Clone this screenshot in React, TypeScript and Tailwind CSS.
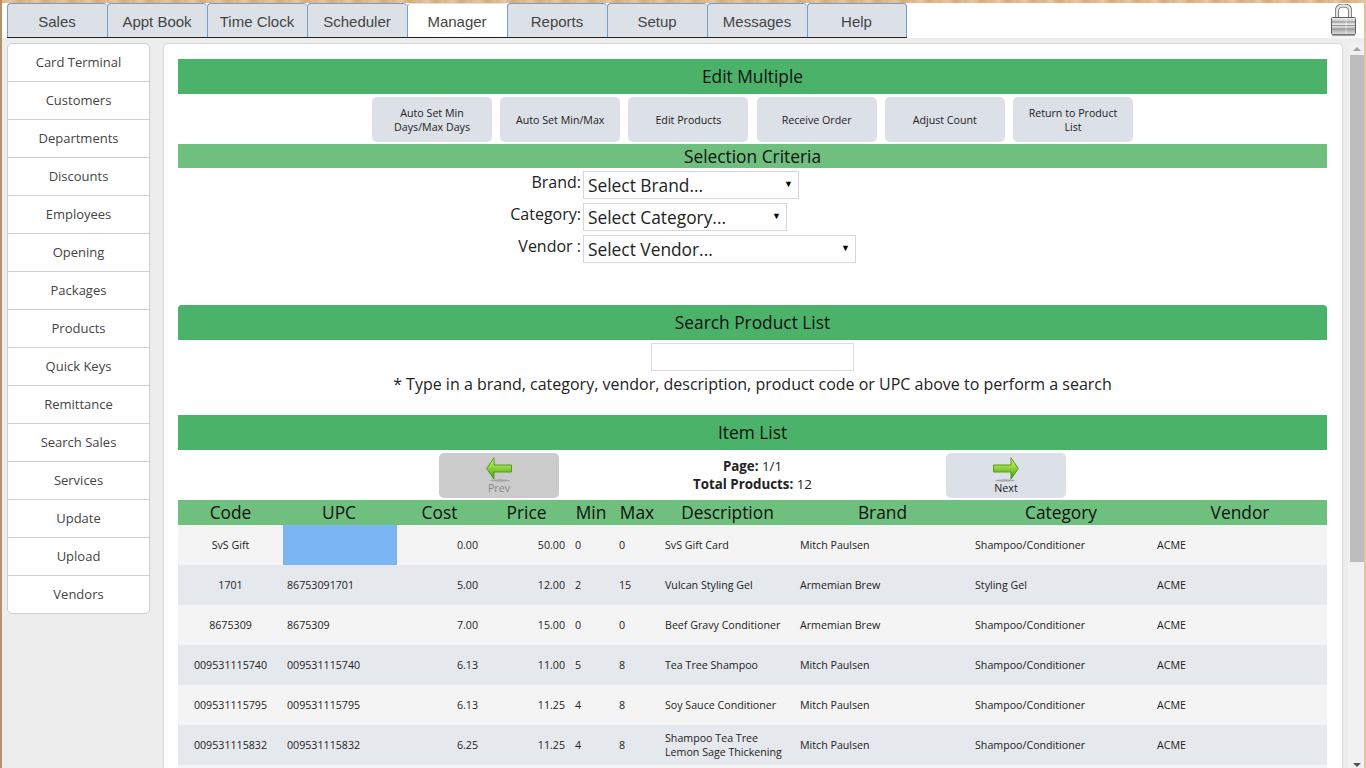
import React from "react";

const tabs = ["Sales", "Appt Book", "Time Clock", "Scheduler", "Manager", "Reports", "Setup", "Messages", "Help"];
const menu = ["Card Terminal", "Customers", "Departments", "Discounts", "Employees", "Opening", "Packages", "Products", "Quick Keys", "Remittance", "Search Sales", "Services", "Update", "Upload", "Vendors"];
const actions = [["Auto Set Min", "Days/Max Days"], ["Auto Set Min/Max"], ["Edit Products"], ["Receive Order"], ["Adjust Count"], ["Return to Product", "List"]];

const rows = [
  ["SvS Gift", "", "0.00", "50.00", "0", "0", ["SvS Gift Card"], "Mitch Paulsen", "Shampoo/Conditioner", "ACME"],
  ["1701", "86753091701", "5.00", "12.00", "2", "15", ["Vulcan Styling Gel"], "Armemian Brew", "Styling Gel", "ACME"],
  ["8675309", "8675309", "7.00", "15.00", "0", "0", ["Beef Gravy Conditioner"], "Armemian Brew", "Shampoo/Conditioner", "ACME"],
  ["009531115740", "009531115740", "6.13", "11.00", "5", "8", ["Tea Tree Shampoo"], "Mitch Paulsen", "Shampoo/Conditioner", "ACME"],
  ["009531115795", "009531115795", "6.13", "11.25", "4", "8", ["Soy Sauce Conditioner"], "Mitch Paulsen", "Shampoo/Conditioner", "ACME"],
  ["009531115832", "009531115832", "6.25", "11.25", "4", "8", ["Shampoo Tea Tree", "Lemon Sage Thickening"], "Mitch Paulsen", "Shampoo/Conditioner", "ACME"],
] as const;

const columns = [
  ["Code", "w-[105px]"],
  ["UPC", "w-[114px] pr-[2px]"],
  ["Cost", "w-[85px]"],
  ["Price", "w-[87px] pl-[2px]"],
  ["Min", "w-[44px]"],
  ["Max", "w-[48px]"],
  ["Description", "w-[135px] pr-[2px]"],
  ["Brand", "w-[175px] pr-[2px]"],
  ["Category", "w-[182px] pr-[2px]"],
  ["Vendor", "w-[174px]"],
];

function Lock() {
  return (
    <svg width="26" height="33" viewBox="0 0 26 33" className="mt-[1px]">
      <defs>
        <linearGradient id="lockbody" x1="0" y1="0" x2="0" y2="1">
          <stop offset="0" stopColor="#f4f4f4" />
          <stop offset="0.25" stopColor="#c4c4c4" />
          <stop offset="0.45" stopColor="#ededed" />
          <stop offset="0.7" stopColor="#adadad" />
          <stop offset="1" stopColor="#dedede" />
        </linearGradient>
      </defs>
      <path d="M6 15V6.500C6 3 8.500 1.500 12.500 1.500S19 3 19 6.500V15" fill="none" stroke="#6f6f6f" strokeWidth="4" />
      <path d="M6 15V6.500C6 3 8.500 1.500 12.500 1.500S19 3 19 6.500V15" fill="none" stroke="#e4e4e4" strokeWidth="2.400" />
      <rect x="0.500" y="13.500" width="24" height="17" rx="1" fill="url(#lockbody)" stroke="#5f5f5f" />
      <path d="M1 18h23M1 21.500h23M1 25h23" stroke="#949494" strokeWidth="1" />
      <path d="M15 14v16" stroke="#ffffff" strokeOpacity="0.45" strokeWidth="1" />
      <path d="M1 31.500h23" stroke="#a5a5a5" strokeWidth="1.500" />
    </svg>
  );
}

function Arrow({ flip }: { flip?: boolean }) {
  const id = flip ? "arrowprev" : "arrownext";
  return (
    <svg width="26" height="25" viewBox="0 0 26 25" className={flip ? "-scale-x-100" : ""}>
      <defs>
        <linearGradient id={id} x1="0" y1="0" x2="0" y2="1">
          <stop offset="0" stopColor="#d6f29a" />
          <stop offset="0.45" stopColor="#93d63a" />
          <stop offset="1" stopColor="#3f9a10" />
        </linearGradient>
      </defs>
      <ellipse cx="12" cy="23.500" rx="10" ry="1.200" fill="#9a9a9a" fillOpacity="0.8" />
      <path d="M0.500 8H18V0.800L25.300 11.500L18 22.200V15H0.500Z" fill={`url(#${id})`} stroke="#559a22" strokeWidth="1" strokeLinejoin="round" />
    </svg>
  );
}

function Dropdown({ label, text, width }: { label: string; text: string; width: string }) {
  return (
    <div className="flex h-[28px] items-start">
      <label className="w-[403px] text-right text-[16px] leading-[22px] text-[#222]">{label}</label>
      <div className={`ml-[2px] flex h-[28px] items-center justify-between border border-[#d5d5dd] bg-white pl-[4px] pr-[5px] text-[17.33px] text-[#222] ${width}`}>
        <span className="mt-[1px]">{text}</span>
        <span className="mb-[2px] text-[9px] text-black">▼</span>
      </div>
    </div>
  );
}

export default function App() {
  return (
    <div className="flex h-screen flex-col overflow-hidden border-x-2 border-l-[#b8916c] border-r-[#e5c49a] bg-[#ededed] font-['Open_Sans',sans-serif]">
      <div className="h-[3px] shrink-0 bg-[repeating-linear-gradient(90deg,#dcb485_0px,#e8c79c_9px,#d6ab78_17px,#e2bd8f_26px)]" />
      <div className="flex h-[35px] shrink-0 items-start justify-between bg-white pl-[5px] pr-[7px]">
        <div className="flex border-b border-[#222]">
          {tabs.map((t) => (
            <div
              key={t}
              className={`flex h-[34px] w-[100px] items-center justify-center rounded-t-[4px] border-l border-t border-[#6f9fcc] pr-[1px] pt-[3px] font-['Liberation_Sans',sans-serif] text-[15px] text-[#444] ${t === "Manager" ? "border-t-[#d5e3f0] bg-white" : "bg-[#dce1e8]"} ${t === "Help" ? "border-r" : ""}`}
            >
              {t}
            </div>
          ))}
        </div>
        <Lock />
      </div>

      <div className="flex min-h-0 flex-1 pt-[5px]">
        <div className="ml-[5px] w-[143px] shrink-0">
          <div className="overflow-hidden rounded-[5px] border border-[#cfcfcf] bg-white">
            {menu.map((m, i) => (
              <div key={m} className={`flex items-center justify-center text-[13px] text-[#444] ${i > 0 ? "h-[38px] border-t border-[#cfcfcf]" : "h-[37px] pt-[1px]"}`}>
                {m}
              </div>
            ))}
          </div>
        </div>

        <div className="ml-[13px] w-[1180px] shrink-0 overflow-hidden rounded-t-[5px] border border-b-0 border-[#d8d8d8] bg-white pl-[14px] pr-[15px] pt-[15px]">
          <div className="flex h-[35px] items-center justify-center bg-[#4bb26a] text-[17.33px] text-[#111]">Edit Multiple</div>
          <div className="mt-[3px] flex h-[45px] justify-center gap-[8.2px]">
            {actions.map((a) => (
              <div key={a[0]} className="flex w-[120px] flex-col items-center justify-center rounded-[5px] bg-[#dce0e7] text-center text-[10.67px] leading-[14px] text-[#222]">
                {a.map((l) => (
                  <span key={l}>{l}</span>
                ))}
              </div>
            ))}
          </div>
          <div className="mt-[2px] flex h-[24px] items-center justify-center bg-[#6fbf7f] pt-[1px] text-[17.33px] text-[#111]">Selection Criteria</div>
          <div className="mt-[3px] flex flex-col gap-[4px]">
            <Dropdown label="Brand:" text="Select Brand..." width="w-[216px]" />
            <Dropdown label="Category:" text="Select Category..." width="w-[204px]" />
            <Dropdown label="Vendor :" text="Select Vendor..." width="w-[273px]" />
          </div>

          <div className="mt-[42px] flex h-[35px] items-center justify-center rounded-t-[4px] bg-[#4bb26a] text-[17.33px] text-[#111]">Search Product List</div>
          <div className="mt-[3px] flex justify-center">
            <input className="h-[28px] w-[203px] border border-[#dcdce2] bg-white" />
          </div>
          <div className="mt-[2px] text-center text-[16px] leading-[22px] text-[#222]">* Type in a brand, category, vendor, description, product code or UPC above to perform a search</div>

          <div className="mt-[20px] flex h-[35px] items-center justify-center bg-[#4bb26a] text-[17.33px] text-[#111]">Item List</div>
          <div className="mt-[3px] flex h-[47px] items-start pl-[261px]">
            <div className="flex h-[45px] w-[120px] flex-col items-center justify-center rounded-[5px] bg-[#cbcbcb] text-[10.67px] leading-[13px] text-[#888]">
              <Arrow flip />
              <span>Prev</span>
            </div>
            <div className="w-[387px] pt-[4px] text-center text-[13.33px] leading-[18px] text-[#222]">
              <div><b>Page:</b> 1/1</div>
              <div><b>Total Products:</b> 12</div>
            </div>
            <div className="flex h-[45px] w-[120px] flex-col items-center justify-center rounded-[5px] bg-[#dce0e7] text-[10.67px] leading-[13px] text-[#222]">
              <Arrow />
              <span>Next</span>
            </div>
          </div>

          <table className="w-[1149px] table-fixed border-collapse">
            <thead>
              <tr className="h-[25px] bg-[#6fbf7f]">
                {columns.map(([c, w]) => (
                  <th key={c} className={`py-0 text-center text-[17.33px] font-normal leading-[25px] text-[#111] ${w}`}>{c}</th>
                ))}
              </tr>
            </thead>
            <tbody>
              {rows.map((r, i) => (
                <tr key={r[0]} className={`h-[40px] text-[10.67px] leading-[14px] text-[#222] ${i % 2 === 0 ? "bg-[#f4f4f4]" : "bg-[#e5e8ed]"}`}>
                  <td className="p-0 text-center">{r[0]}</td>
                  <td className={`px-[4px] py-0 ${i === 0 ? "bg-[#7cb5f4]" : ""}`}>{r[1]}</td>
                  <td className="px-[4px] py-0 text-right">{r[2]}</td>
                  <td className="px-[4px] py-0 text-right">{r[3]}</td>
                  <td className="py-0 pl-[6px] pr-0">{r[4]}</td>
                  <td className="py-0 pl-[6px] pr-0">{r[5]}</td>
                  <td className="px-[4px] py-0">
                    {r[6].map((l) => (
                      <div key={l}>{l}</div>
                    ))}
                  </td>
                  <td className="px-[4px] py-0">{r[7]}</td>
                  <td className="px-[4px] py-0">{r[8]}</td>
                  <td className="px-[4px] py-0">{r[9]}</td>
                </tr>
              ))}
              <tr className="h-[40px] bg-[#f4f4f4]"><td colSpan={10} /></tr>
            </tbody>
          </table>
        </div>

        <div className="ml-[5px] flex w-[17px] shrink-0 flex-col items-center bg-[#f1f1f1] pb-[1px]">
          <div className="mt-[4px] h-0 w-0 border-x-[4px] border-b-[4px] border-x-transparent border-b-[#a3a3a3]" />
          <div className="mt-[4px] h-[507px] w-[14px] bg-[#bcbcbc]" />
          <div className="flex-1" />
          <div className="h-0 w-0 border-x-[4px] border-t-[4px] border-x-transparent border-t-[#505050]" />
        </div>
      </div>
    </div>
  );
}
